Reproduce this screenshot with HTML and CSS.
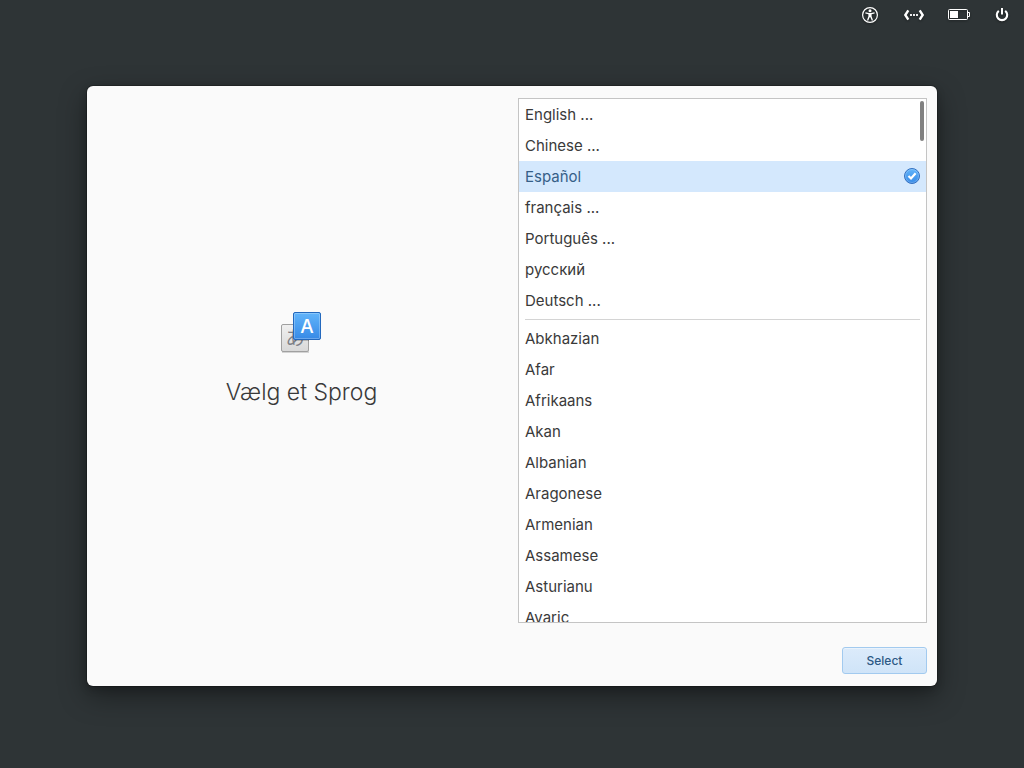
FILE: index.html
```html
<!DOCTYPE html>
<html lang="da">
<head>
<meta charset="utf-8">
<meta name="viewport" content="width=device-width, initial-scale=1">
<title>Vælg et Sprog</title>
<link rel="stylesheet" href="styles.css">
</head>
<body>
<header class="panel">
  <button class="indicator" type="button" aria-label="Accessibility">
    <svg width="24" height="20" viewBox="0 0 24 20"><circle cx="12" cy="10" r="7.4" fill="none" stroke="#fff" stroke-width="1.2"/><circle cx="12" cy="5.8" r="1.5" fill="#fff"/><path d="M7.5 7.3 11 8h2l3.5-.7.2 1.1-3.1.8v2l1.4 4.1-1.1.4L12.2 12h-.4l-1.7 3.7-1.1-.4 1.4-4.1v-2l-3.1-.8z" fill="#fff"/></svg>
  </button>
  <button class="indicator" type="button" aria-label="Network">
    <svg width="24" height="20" viewBox="0 0 24 20"><path d="M6.300 5.300 3.300 10l3 4.700M17.700 5.300l3 4.700-3 4.700" fill="none" stroke="#fff" stroke-width="2.400"/><path d="M8 9h2v2H8zM11 9h2v2h-2zM14 9h2v2h-2z" fill="#fff" fill-opacity=".9"/></svg>
  </button>
  <button class="indicator" type="button" aria-label="Battery">
    <svg width="24" height="20" viewBox="0 0 24 20"><rect x="2.500" y="4.500" width="19" height="10" rx="1" fill="none" stroke="#fff"/><path d="M4 6h8v7H4z" fill="#fff"/><path d="M22 7.500h1.500v4H22" fill="none" stroke="#fff"/></svg>
  </button>
  <button class="indicator" type="button" aria-label="Power">
    <svg width="24" height="20" viewBox="0 0 24 20"><path d="M8.800 5.800a5.200 5.200 0 1 0 6.400 0" fill="none" stroke="#fff" stroke-width="2.100"/><path d="M12 3v6.500" stroke="#fff" stroke-width="2"/></svg>
  </button>
</header>
<main class="stage">
  <form class="dialog">
    <section class="intro">
      <svg class="intro-icon" width="48" height="48" viewBox="0 0 48 48" aria-hidden="true">
        <defs>
          <linearGradient id="blue" x1="0" y1="0" x2="0" y2="1"><stop offset="0" stop-color="#62b5fb"/><stop offset="1" stop-color="#3689e6"/></linearGradient>
          <linearGradient id="gray" x1="0" y1="0" x2="0" y2="1"><stop offset="0" stop-color="#f0f0f0"/><stop offset="1" stop-color="#d8d8d8"/></linearGradient>
        </defs>
        <path d="M4 44h27" stroke="#000" stroke-opacity=".15" stroke-width="2"/>
        <rect x="3.500" y="16.500" width="27" height="27" rx="1.500" fill="url(#gray)" stroke="#a0a0a0"/>
        <text class="kana" x="17" y="37" text-anchor="middle">あ</text>
        <path d="M16 32.500h15" stroke="#000" stroke-opacity=".2"/>
        <rect x="15.500" y="4.500" width="27" height="27" rx="1.500" fill="url(#blue)" stroke="#2368bd"/>
        <rect x="16.500" y="5.500" width="25" height="25" rx="1" fill="none" stroke="#fff" stroke-opacity=".25"/>
        <text class="latin" x="29" y="25" text-anchor="middle">A</text>
      </svg>
      <h1 class="title">Vælg et Sprog</h1>
    </section>
    <section class="picker">
      <div class="frame">
        <div class="languages" role="radiogroup" aria-label="Vælg et Sprog">
          <label class="row"><input type="radio" name="lang"><span>English ...</span></label>
          <label class="row"><input type="radio" name="lang"><span>Chinese ...</span></label>
          <label class="row"><input type="radio" name="lang" checked><span>Español</span>
            <svg class="check" width="16" height="18" viewBox="0 0 16 18" aria-hidden="true"><circle cx="8" cy="8" r="7.500" fill="url(#blue)" stroke="#3571c1"/><circle cx="8" cy="8" r="6.500" fill="none" stroke="#fff" stroke-opacity=".22"/><path d="m4.500 8 2.500 2.500 4.600-5.300" fill="none" stroke="#fff" stroke-width="2.200"/></svg>
          </label>
          <label class="row"><input type="radio" name="lang"><span>français ...</span></label>
          <label class="row"><input type="radio" name="lang"><span>Português ...</span></label>
          <label class="row"><input type="radio" name="lang"><span>русский</span></label>
          <label class="row"><input type="radio" name="lang"><span>Deutsch ...</span></label>
          <hr class="separator">
          <label class="row"><input type="radio" name="lang"><span>Abkhazian</span></label>
          <label class="row"><input type="radio" name="lang"><span>Afar</span></label>
          <label class="row"><input type="radio" name="lang"><span>Afrikaans</span></label>
          <label class="row"><input type="radio" name="lang"><span>Akan</span></label>
          <label class="row"><input type="radio" name="lang"><span>Albanian</span></label>
          <label class="row"><input type="radio" name="lang"><span>Aragonese</span></label>
          <label class="row"><input type="radio" name="lang"><span>Armenian</span></label>
          <label class="row"><input type="radio" name="lang"><span>Assamese</span></label>
          <label class="row"><input type="radio" name="lang"><span>Asturianu</span></label>
          <label class="row"><input type="radio" name="lang"><span>Avaric</span></label>
        </div>
        <div class="scroll-thumb"></div>
      </div>
      <button class="select" type="button">Select</button>
    </section>
  </form>
</main>
</body>
</html>
```

FILE: styles.css
```css
* { box-sizing: border-box; }

body {
  margin: 0;
  height: 100vh;
  display: flex;
  flex-direction: column;
  background: #2e3436;
  color: #3a3a3a;
  font-family: Inter, "Open Sans", sans-serif;
  font-size: 15px;
}

.panel {
  display: flex;
  justify-content: flex-end;
  align-items: center;
  gap: 20px;
  height: 30px;
  padding-right: 10px;
}

.indicator {
  display: flex;
  padding: 0;
  border: 0;
  background: none;
  filter: drop-shadow(0 1px 1px rgba(0, 0, 0, 0.4));
}

.stage {
  flex: 1;
  min-height: 0;
  display: flex;
  padding: 56px 87px 82px;
}

.dialog {
  flex: 1;
  min-height: 0;
  display: grid;
  grid-template-columns: 1fr 1fr;
  grid-template-rows: minmax(0, 1fr);
  gap: 12px;
  padding: 12px 10px;
  border-radius: 6px;
  background: #fafafa;
  box-shadow: 0 0 0 1px rgba(0, 0, 0, 0.2), 0 10px 28px rgba(0, 0, 0, 0.4), 0 3px 8px rgba(0, 0, 0, 0.2);
}

.intro {
  display: flex;
  flex-direction: column;
  align-items: center;
  justify-content: center;
  gap: 16px;
  padding-bottom: 53px;
}

.kana {
  font: 19px "Noto Sans CJK JP", sans-serif;
  fill: #7e8087;
}

.latin {
  font: 500 19px Inter, sans-serif;
  fill: #fff;
}

.title {
  margin: 0;
  font-size: 23px;
  font-weight: 300;
  line-height: 40px;
}

.picker {
  display: flex;
  flex-direction: column;
  align-items: flex-end;
  gap: 24px;
  min-height: 0;
}

.frame {
  position: relative;
  flex: 1;
  width: 100%;
  min-height: 0;
  border: 1px solid #c4c4c4;
  background: #fff;
}

.languages {
  height: 100%;
  overflow-y: auto;
  scrollbar-width: none;
}

.row {
  display: flex;
  align-items: center;
  justify-content: space-between;
  height: 31px;
  padding: 0 6px;
}

.row input {
  position: absolute;
  opacity: 0;
  pointer-events: none;
}

.row:has(input:checked) {
  background: #d4e8fd;
  color: #365f88;
}

.separator {
  height: 1px;
  margin: 3px 6px;
  border: 0;
  background: #d4d4d4;
}

.scroll-thumb {
  position: absolute;
  top: 2px;
  right: 2px;
  width: 4px;
  height: 40px;
  border-radius: 2px;
  background: #808080;
}

.select {
  min-width: 85px;
  height: 27px;
  padding: 0 12px;
  border: 1px solid #a2caef;
  border-radius: 3px;
  background: linear-gradient(#dcebfb, #cfe4f8);
  box-shadow: inset 0 1px rgba(255, 255, 255, 0.4);
  color: #2c5884;
  font: 500 12px Inter, sans-serif;
}
```
